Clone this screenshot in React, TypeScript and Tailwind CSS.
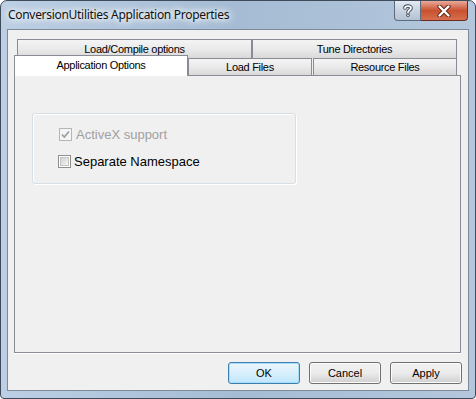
import React from 'react';

const tabBase =
  'flex items-center justify-center border border-[#898c95] bg-linear-to-b from-[#f4f4f4] via-[#eaeaea] to-[#d9d9d9] text-[11px] tracking-[-0.3px] text-black leading-none';

const Check: React.FC<{ checked?: boolean; disabled?: boolean }> = ({ checked, disabled }) => {
  return (
    <span
      className={`relative flex h-[13px] w-[13px] shrink-0 items-center justify-center border ${
        disabled ? 'border-[#b6b6b6] bg-[#f4f4f4]' : 'border-[#8e8f8f] bg-white'
      }`}
    >
      {!disabled && (
        <span className="h-[9px] w-[9px] border border-[#c4c4c4] bg-linear-to-br from-[#d2d2d2] to-[#f6f6f6]" />
      )}
      {checked && (
        <svg width="11" height="11" viewBox="0 0 11 11" className="absolute">
          <path d="M2 5.5 L4.3 8 L9 2.5" fill="none" stroke={disabled ? '#9a9a9a' : '#333'} strokeWidth="1.6" />
        </svg>
      )}
    </span>
  );
};

const WinButton: React.FC<{ title: string; isDefault?: boolean }> = ({ title, isDefault }) => {
  return (
    <button
      className={`flex h-[22px] w-[72px] items-center justify-center rounded-[3px] border text-[11px] text-black ${
        isDefault
          ? 'border-[#3c7fb1] bg-linear-to-b from-[#eaf6fd] via-[#d9f0fc] to-[#bee6fd] shadow-[inset_0_0_0_1px_#a8dcf8]'
          : 'border-[#707070] bg-linear-to-b from-[#f2f2f2] via-[#ebebeb] to-[#cfcfcf] shadow-[inset_0_0_0_1px_#fcfcfc]'
      }`}
    >
      {title}
    </button>
  );
};

const App: React.FC = () => {
  return (
    <div className="h-[399px] w-[476px] bg-white font-['Liberation_Sans',Arial,sans-serif]">
      <div className="flex h-[399px] w-[476px] flex-col rounded-t-[7px] rounded-b-[4px] border border-[#3f4b5b] bg-linear-to-r from-[#bccfe4] via-[#a5bcd4] to-[#b4c7dc]">
        {/* Title bar */}
        <div className="flex h-[28px] shrink-0">
          <span className="self-center pl-[7px] text-[12px] tracking-[-0.3px] text-[#111] font-['Noto_Sans',sans-serif] [text-shadow:0_0_6px_#fff,0_0_8px_#fff,0_0_10px_#fff]">
            ConversionUtilities Application Properties
          </span>
          <div className="ml-auto mr-[7px] flex self-start">
            <div className="flex h-[20px] w-[27px] items-center justify-center rounded-bl-[4px] border border-t-0 border-[#5b6a7d] bg-linear-to-b from-[#e3eaf2] via-[#c7d3e0] to-[#b4c3d3]">
              <svg width="10" height="13" viewBox="0 0 10 13">
                <path d="M2 4 C2 1.5 8 1.5 8 4 C8 6 5 6 5 8.5" fill="none" stroke="#3a4656" strokeWidth="3.6" strokeLinecap="round" />
                <circle cx="5" cy="11.3" r="1.7" fill="#3a4656" />
                <path d="M2 4 C2 1.5 8 1.5 8 4 C8 6 5 6 5 8.5" fill="none" stroke="#ffffff" strokeWidth="1.8" strokeLinecap="round" />
                <circle cx="5" cy="11.3" r="0.9" fill="#ffffff" />
              </svg>
            </div>
            <div className="flex h-[20px] w-[47px] items-center justify-center rounded-br-[4px] border border-t-0 border-l-0 border-[#6e2a1f] bg-linear-to-b from-[#e9a899] via-[#c9512f] to-[#d66f4d]">
              <svg width="14" height="12" viewBox="0 0 14 12">
                <path d="M2.5 1.5 L11.5 10.5 M11.5 1.5 L2.5 10.5" stroke="#5a2418" strokeWidth="4.2" strokeLinecap="round" />
                <path d="M2.5 1.5 L11.5 10.5 M11.5 1.5 L2.5 10.5" stroke="#ffffff" strokeWidth="2.4" strokeLinecap="round" />
              </svg>
            </div>
          </div>
        </div>

        {/* Client area */}
        <div className="mx-[6px] flex h-[362px] flex-col border border-[#7d8a9b] bg-[#f0f0f0]">
          <div className="pt-[9px]">
            <div className="ml-[9px] flex h-[19px]">
              <div className={`${tabBase} w-[235px] border-b-0`}>Load/Compile options</div>
              <div className={`${tabBase} w-[205px] border-b-0`}>Tune Directories</div>
            </div>
            <div className="ml-[6px] flex h-[17px] items-end">
              <div className="relative z-10 -mb-px flex h-[21px] w-[174px] items-center justify-center border border-b-0 border-[#898c95] bg-white pb-[2px] text-[11px] leading-none tracking-[-0.3px] text-black">
                Application Options
              </div>
              <div className={`${tabBase} h-[17px] w-[124px] border-b-0`}>Load Files</div>
              <div className={`${tabBase} ml-px h-[17px] w-[144px] border-b-0`}>Resource Files</div>
            </div>
            <div className="ml-[6px] h-[278px] w-[447px] border border-[#898c95] bg-[#f0f0f0] shadow-[0_1px_0_#ffffff]">
              <div className="ml-[17px] mt-[37px] h-[71px] w-[264px] rounded-[3px] border border-[#d5dfe5] shadow-[inset_1px_1px_0_#ffffff,1px_1px_0_#ffffff]">
                <label className="ml-[26px] mt-[13px] flex h-[15px] items-center gap-[4px] text-[13px] leading-none text-[#a0a0a0]">
                  <Check checked disabled />
                  <span>ActiveX support</span>
                </label>
                <label className="ml-[25px] mt-[12px] flex h-[15px] items-center gap-[3px] text-[13px] leading-none text-black">
                  <Check />
                  <span>Separate Namespace</span>
                </label>
              </div>
            </div>
          </div>
          <div className="mt-[9px] flex justify-end gap-[9px] pr-[6px]">
            <WinButton title="OK" isDefault />
            <WinButton title="Cancel" />
            <WinButton title="Apply" />
          </div>
        </div>
      </div>
    </div>
  );
};

export default App;
